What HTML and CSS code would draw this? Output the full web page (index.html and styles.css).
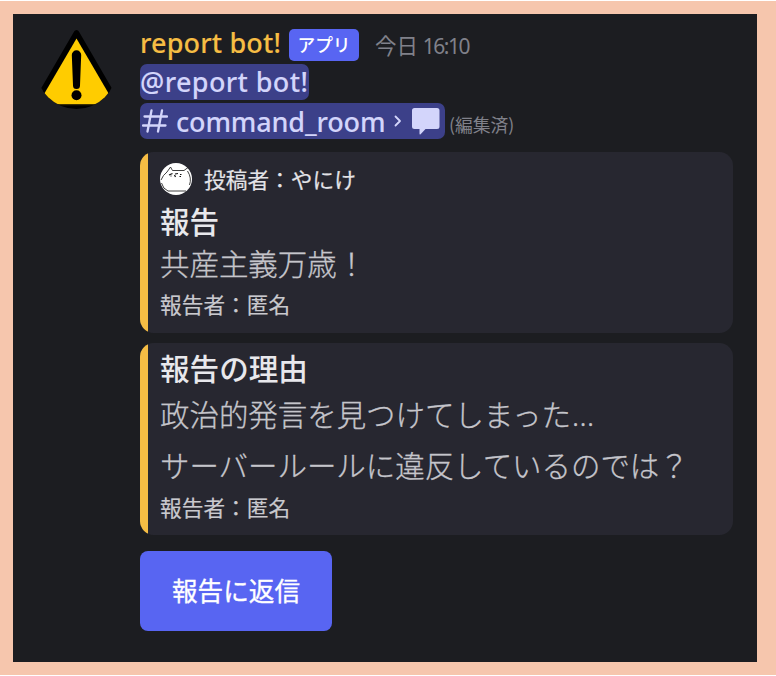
FILE: index.html
```html
<!DOCTYPE html>
<html lang="ja">
<head>
<meta charset="utf-8">
<title>report bot!</title>
<link rel="stylesheet" href="styles.css">
</head>
<body>
<main class="frame">
  <article class="message">
    <svg class="avatar" viewBox="0 0 72 80">
      <defs><clipPath id="round"><circle cx="35.5" cy="40" r="40"/></clipPath></defs>
      <g clip-path="url(#round)">
        <path d="M35.500 4L-13.400 88H84.400Z" fill="#000" stroke="#000" stroke-width="5.500" stroke-linejoin="round"/>
        <path d="M35.500 9.500L-2.800 75H73.800Z" fill="#fc0"/>
        <path d="M30.800 26a4.700 4.700 0 0 1 9.400 0L39 56.500a3.500 3.500 0 0 1-7 0Z" fill="#000"/>
        <circle cx="35.500" cy="66.300" r="5" fill="#000"/>
        <path d="M0 75.700H72" stroke="#806806" stroke-width=".6"/>
      </g>
    </svg>
    <div class="content">
      <header class="byline">
        <span class="name">report bot!</span>
        <span class="tag">アプリ</span>
        <time class="time">今日 <span class="clock">16:10</span></time>
      </header>
      <div class="mention user">@report bot!</div>
      <div class="mention-row">
        <div class="mention channel">
          <svg class="hash" viewBox="0 0 26 24" fill="none" stroke="#d3d5fb" stroke-width="2.300" stroke-linecap="round"><path d="M9.500 1.500L5.500 22.500M20 1.500L16 22.500M2.500 7.500H25M1 16.500H23.500"/></svg>
          <span class="room">command_room</span>
          <svg class="chevron" viewBox="0 0 8 12" fill="none" stroke="#d3d5fb" stroke-width="1.800" stroke-linecap="round" stroke-linejoin="round"><path d="M1.500 1.500L6 6L1.500 10.500"/></svg>
          <svg class="bubble" viewBox="0 0 28 27" fill="#d3d5fb"><path d="M2.500 0H25a2.500 2.500 0 0 1 2.500 2.500V18.500a2.500 2.500 0 0 1-2.500 2.500H13.500L8.600 26.200Q7.500 27 7.500 25.500V21H2.500A2.500 2.500 0 0 1 0 18.500V2.500A2.500 2.500 0 0 1 2.500 0Z"/></svg>
        </div>
        <span class="edited">(編集済)</span>
      </div>
      <section class="embed">
        <div class="author">
          <svg class="cat" viewBox="0 0 32 32">
            <circle cx="16" cy="16" r="16" fill="#fff"/>
            <g fill="none" stroke="#111" stroke-width=".8"><path d="M1 17Q3 12 7 9L10.500 4L12.500 7.500H24L28 4.500M27.500 8Q32 15 29.500 22M1.500 20Q3 26 8 28H26"/><path d="M9 12L12.500 10.500M15 11L18 10.500M20 11.500H21.500M10.500 13H11.500M19.500 13.500H21M14.500 12L15.500 14" stroke-width="1.200"/></g>
          </svg>
          <span>投稿者：やにけ</span>
        </div>
        <h2 class="title">報告</h2>
        <p class="text">共産主義万歳！</p>
        <footer class="foot">報告者：匿名</footer>
      </section>
      <section class="embed reason">
        <h2 class="title">報告の理由</h2>
        <p class="text">政治的発言を見つけてしまった<span class="dots">...</span></p>
        <p class="text">サーバールールに違反しているのでは？</p>
        <footer class="foot">報告者：匿名</footer>
      </section>
      <button class="reply">報告に返信</button>
    </div>
  </article>
</main>
</body>
</html>
```
FILE: styles.css
```css
* { box-sizing: border-box; }
body {
  margin: 0;
  height: 676px;
  padding: 1px 0;
  background: #fff;
  font-family: "Noto Sans", "Noto Sans CJK JP", sans-serif;
}
.frame { height: 674px; padding: 13px 19px 13px 13px; background: #f6c6ad; }
.message { display: flex; height: 648px; padding: 15px 24px 0 28px; background: #1c1d21; }
.avatar { width: 72px; height: 80px; margin-right: 27px; flex: none; }
.content { flex: 1; min-width: 0; white-space: nowrap; }
.byline { display: flex; align-items: center; height: 31px; }
.name { width: 149px; height: 31px; font-size: 27px; font-weight: 500; line-height: 28px; letter-spacing: .15px; color: #f6bd44; -webkit-text-stroke: .1px; }
.tag {
  width: 70px; height: 32px; border-radius: 5px; background: #5865f2; color: #fff;
  font: 500 17.700px/30px "Noto Sans CJK JP", sans-serif; text-align: center;
}
.time { margin-left: 16px; color: #80818a; font: 400 21.500px/28px "Noto Sans CJK JP", sans-serif; }
.clock { font-family: "Noto Sans", sans-serif; font-size: 21px; line-height: 0; letter-spacing: -1.500px; }
.mention { background: #3c4089; color: #d3d5fb; border-radius: 7px; font-size: 27px; font-weight: 500; line-height: 36px; height: 36px; -webkit-text-stroke: .1px; }
.user { width: 169px; margin-top: 4px; letter-spacing: .38px; }
.mention-row { display: flex; margin-top: 3px; }
.channel { display: flex; align-items: center; width: 305px; padding-left: 2px; }
.hash { width: 26px; height: 24px; }
.room { width: 210px; height: 36px; line-height: 38px; margin-left: 8px; letter-spacing: -.15px; }
.chevron { width: 8px; height: 12px; margin-left: 8px; }
.bubble { width: 28px; height: 27px; margin-left: 10px; }
.edited { margin-left: 4px; color: #80818a; font: 400 17.800px/42px "Noto Sans CJK JP", sans-serif; height: 36px; }
.embed {
  width: 593px; height: 181px; margin-top: 13px; padding: 11px 0 0 20px; border-radius: 14px;
  background: linear-gradient(to right, #f6bd44 8px, #272730 8px);
  font-family: "Noto Sans CJK JP", sans-serif;
}
.author { display: flex; align-items: center; height: 32px; color: #e3e3e7; font-size: 21.700px; font-weight: 400; line-height: 31px; -webkit-text-stroke: .2px; }
.author span { height: 32px; }
.cat { width: 32px; height: 32px; margin-right: 12px; }
.title { margin: 5px 0 0; font-size: 29.600px; font-weight: 500; line-height: 42px; color: #e8e8ec; }
.text { margin: 0; font-size: 29.450px; font-weight: 300; line-height: 41px; color: #c5c5cb; -webkit-text-stroke: .3px; }
.foot { font-size: 21.700px; font-weight: 400; line-height: 41px; color: #c9c9ce; -webkit-text-stroke: .2px; }
.reason { height: 192px; margin-top: 10px; padding-top: 4px; }
.reason .title { margin: 0 0 -1px; }
.reason .text { line-height: 51px; }
.reason .foot { line-height: 33px; }
.dots { font-family: "Noto Sans", sans-serif; font-size: 29px; line-height: 0; letter-spacing: .4px; margin-left: 1px; }
.reply {
  display: block; width: 192px; height: 80px; margin-top: 16px; padding: 0; border: 0; border-radius: 8px;
  background: #5865f2; color: #fff; font: 400 25.600px/76px "Noto Sans CJK JP", sans-serif; -webkit-text-stroke: .35px;
  padding-bottom: 2px;
}
```
